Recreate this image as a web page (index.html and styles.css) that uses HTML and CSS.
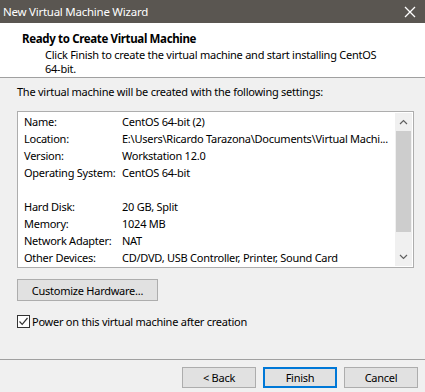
FILE: index.html
```html
<!DOCTYPE html>
<html lang="en">
<head>
    <meta charset="UTF-8">
    <link rel="stylesheet" href="styles.css">
    <title>New Virtual Machine Wizard</title>
</head>
<body>
    <div class="win">
        <!-- title bar -->
        <div class="ttl">
            <span class="ttxt">New Virtual Machine Wizard</span>
            <svg class="xbtn" width="12" height="12" viewBox="0 0 12 12">
                <path d="M1 1L11 11M11 1L1 11" stroke="#ffffff" stroke-width="1.3" fill="none"/>
            </svg>
        </div>
        <!-- header -->
        <div class="hdr">
            <div class="hbold">Ready to Create Virtual Machine</div>
            <div class="hsub">Click Finish to create the virtual machine and start installing CentOS 64-bit.</div>
        </div>
        <!-- body -->
        <div class="bdy">
            <p class="intro">The virtual machine will be created with the following settings:</p>
            <div class="lst">
                <div class="rows">
                    <div class="row"><span class="k">Name:</span><span class="v">CentOS 64-bit (2)</span></div>
                    <div class="row"><span class="k">Location:</span><span class="v">E:\Users\Ricardo Tarazona\Documents\Virtual Machi...</span></div>
                    <div class="row"><span class="k">Version:</span><span class="v">Workstation 12.0</span></div>
                    <div class="row"><span class="k">Operating System:</span><span class="v">CentOS 64-bit</span></div>
                    <div class="row"></div>
                    <div class="row"><span class="k">Hard Disk:</span><span class="v">20 GB, Split</span></div>
                    <div class="row"><span class="k">Memory:</span><span class="v">1024 MB</span></div>
                    <div class="row"><span class="k">Network Adapter:</span><span class="v">NAT</span></div>
                    <div class="row"><span class="k">Other Devices:</span><span class="v">CD/DVD, USB Controller, Printer, Sound Card</span></div>
                </div>
                <div class="sbar">
                    <svg class="arr" width="9" height="6" viewBox="0 0 9 6"><path d="M1 5L4.5 1.5L8 5" stroke="#606060" stroke-width="1.2" fill="none"/></svg>
                    <div class="thumb"></div>
                    <svg class="arr" width="9" height="6" viewBox="0 0 9 6"><path d="M1 1L4.5 4.5L8 1" stroke="#606060" stroke-width="1.2" fill="none"/></svg>
                </div>
            </div>
            <button class="btn cust">Customize Hardware...</button>
            <label class="chk">
                <span class="box">
                    <svg width="11" height="11" viewBox="0 0 11 11"><path d="M1.5 5.5L4.2 8.3L9.5 2" stroke="#333333" stroke-width="1.2" fill="none"/></svg>
                </span>
                Power on this virtual machine after creation
            </label>
        </div>
        <!-- footer -->
        <div class="ftr">
            <button class="btn fb">&lt; Back</button>
            <button class="btn fb dflt">Finish</button>
            <button class="btn fb">Cancel</button>
        </div>
    </div>
</body>
</html>
```

FILE: styles.css
```css
*{
    margin: 0;
    padding: 0;
    box-sizing: border-box;
}
body{
    width: 425px;
    height: 392px;
    overflow: hidden;
    font-family: 'Noto Sans', 'Open Sans', sans-serif;
    font-size: 11px;
    letter-spacing: -0.25px;
    color: #000000;
    background-color: #f0f0f0;
}
.win{
    height: 392px;
    display: flex;
    flex-direction: column;
}
.ttl{
    height: 23px;
    background-color: #5a5651;
    display: flex;
    align-items: center;
    justify-content: space-between;
    padding: 0 9px 0 3px;
}
.ttxt{
    color: #ffffff;
    font-size: 11.5px;
}
.hdr{
    background-color: #ffffff;
    height: 55px;
    padding: 7px 40px 0 22px;
    border-bottom: 1px solid #a0a0a0;
}
.hbold{
    font-weight: bold;
    font-size: 11.5px;
    letter-spacing: -0.35px;
    line-height: 17px;
}
.hsub{
    padding-left: 23px;
    line-height: 14px;
    margin-top: 1px;
}
.bdy{
    padding: 5px 11px 0 17px;
    flex: 1;
}
.intro{
    line-height: 17px;
}
.lst{
    margin-top: 11px;
    height: 157px;
    background-color: #ffffff;
    border: 1px solid #adadad;
    display: flex;
}
.rows{
    flex: 1;
    min-width: 0;
    overflow: hidden;
    padding: 1px 0 0 6px;
}
.row{
    height: 17px;
    line-height: 17px;
    display: flex;
    white-space: nowrap;
}
.k{
    width: 98px;
    flex-shrink: 0;
}
.sbar{
    width: 17px;
    flex-shrink: 0;
    margin: 1px 1px 1px 0;
    background-color: #f0f0f0;
    display: flex;
    flex-direction: column;
    align-items: center;
}
.arr{
    margin: 6px 0;
}
.thumb{
    width: 15px;
    flex: 1;
    background-color: #cdcdcd;
    margin-bottom: 16px;
}
.btn{
    font-family: inherit;
    font-size: 11px;
    letter-spacing: -0.25px;
    background-color: #e1e1e1;
    border: 1px solid #adadad;
    color: #000000;
    height: 22px;
}
.cust{
    margin-top: 11px;
    width: 141px;
}
.chk{
    display: flex;
    align-items: center;
    gap: 2px;
    margin-top: 13px;
}
.box{
    width: 13px;
    height: 13px;
    border: 1px solid #333333;
    background-color: #ffffff;
    display: flex;
    align-items: center;
    justify-content: center;
}
.ftr{
    height: 33px;
    border-top: 1px solid #a0a0a0;
    display: flex;
    justify-content: flex-end;
    gap: 7px;
    padding: 7px 7px 0 0;
}
.fb{
    width: 74px;
    height: 21px;
}
.dflt{
    border: 2px solid #0078d7;
}
```
